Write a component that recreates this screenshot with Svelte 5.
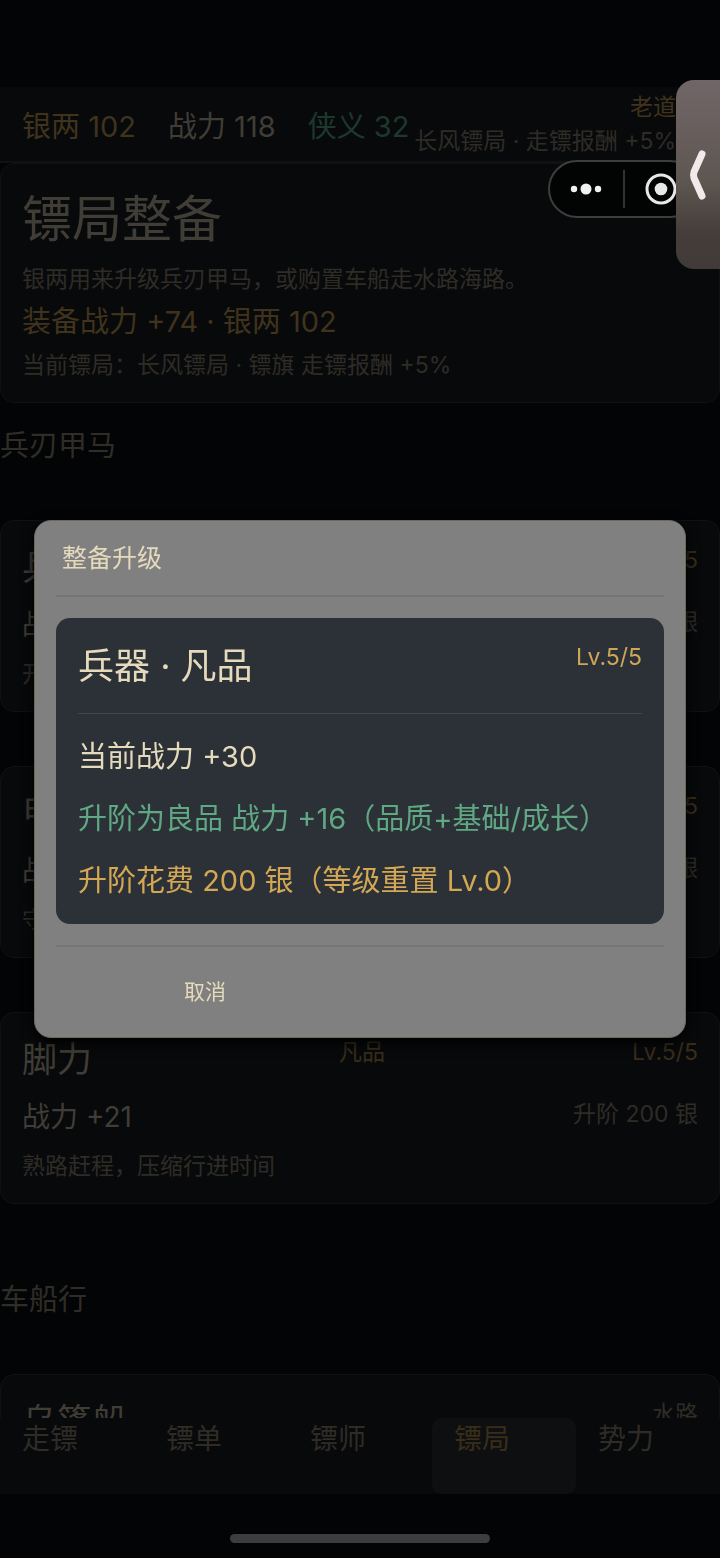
<script>
  let activeTab = '镖局';
  let showUpgrade = true;

  const tabs = ['走镖', '镖单', '镖师', '镖局', '势力'];

  const gear = [
    { name: '兵器', grade: '凡品', level: 'Lv.5/5', power: 30, cost: 200, desc: '开锋砺刃，增添战力' },
    { name: '甲胄', grade: '凡品', level: 'Lv.5/5', power: 23, cost: 200, desc: '守身护镖，减少折损' },
    { name: '脚力', grade: '凡品', level: 'Lv.5/5', power: 21, cost: 200, desc: '熟路赶程，压缩行进时间' }
  ];
</script>

<div class="app">
  <header class="topbar">
    <div class="stats">
      <span class="gold">银两 102</span>
      <span>战力 118</span>
      <span class="green">侠义 32</span>
    </div>
    <div class="player">
      <span class="gold">老道</span>
      <span>长风镖局 · 走镖报酬 +5%</span>
    </div>
  </header>

  <main>
    <section class="card hero">
      <h1>镖局整备</h1>
      <p class="small">银两用来升级兵刃甲马，或购置车船走水路海路。</p>
      <p class="total">装备战力 +74 · 银两 102</p>
      <p class="small">当前镖局：长风镖局 · 镖旗 走镖报酬 +5%</p>
    </section>

    <section class="group">
      <h2>兵刃甲马</h2>
      {#each gear as item}
        <article class="card item">
          <div class="row">
            <h3>{item.name}</h3>
            <span class="tag">{item.grade}</span>
            <span class="tag">{item.level}</span>
          </div>
          <div class="row">
            <span class="power">战力 +{item.power}</span>
            <span class="cost">升阶 {item.cost} 银</span>
          </div>
          <p class="desc">{item.desc}</p>
        </article>
      {/each}
    </section>

    <section class="group boats">
      <h2>车船行</h2>
      <article class="card item">
        <div class="row">
          <h3>乌篷船</h3>
          <span class="cost">水路</span>
        </div>
      </article>
    </section>
  </main>

  <nav class="tabs">
    {#each tabs as tab}
      <button class:active={tab === activeTab} on:click={() => (activeTab = tab)}>{tab}</button>
    {/each}
  </nav>
  <div class="home"><span></span></div>
</div>

{#if showUpgrade}
  <div class="overlay">
    <div class="dialog" role="dialog" aria-labelledby="dialog-title">
      <h2 id="dialog-title">整备升级</h2>
      <div class="detail">
        <div class="detail-head">
          <h3>兵器 · 凡品</h3>
          <span>Lv.5/5</span>
        </div>
        <p>当前战力 +30</p>
        <p class="gain">升阶为良品 战力 +16（品质+基础/成长）</p>
        <p class="price">升阶花费 200 银（等级重置 Lv.0）</p>
      </div>
      <div class="actions">
        <button on:click={() => (showUpgrade = false)}>取消</button>
      </div>
    </div>
  </div>
{/if}

<div class="capsule">
  <button aria-label="更多">
    <svg width="34" height="14" viewBox="0 0 34 14" fill="#f2f2f2">
      <circle cx="5" cy="7" r="3.2" />
      <circle cx="17" cy="7" r="5.5" />
      <circle cx="29" cy="7" r="3.2" />
    </svg>
  </button>
  <i></i>
  <button aria-label="关闭">
    <svg width="32" height="32" viewBox="0 0 32 32">
      <circle cx="16" cy="16" r="14" fill="none" stroke="#e8e8e8" stroke-width="3" />
      <circle cx="16" cy="16" r="6.3" fill="#e8e8e8" />
    </svg>
  </button>
</div>

<button class="drawer" aria-label="展开">
  <svg width="20" height="54" viewBox="0 0 20 54" fill="none" stroke="#f1e9ea" stroke-width="7" stroke-linecap="round" stroke-linejoin="round">
    <path d="M14 6 L6 24 Q5 27 6 30 L14 48" />
  </svg>
</button>

<style>
  :global(body) {
    background: #030406;
  }

  .app,
  .overlay {
    font-family: Inter, "Noto Sans CJK SC", sans-serif;
    font-weight: 400;
  }

  .app {
    display: flex;
    flex-direction: column;
    height: 100vh;
    box-sizing: border-box;
    padding-top: 87px;
    color: #403d36;
    font-size: 29px;
    overflow: hidden;
  }

  h1,
  h2,
  h3,
  p {
    margin: 0;
    font-weight: 400;
  }

  button {
    border: 0;
    padding: 0;
    background: none;
    font: inherit;
    color: inherit;
    cursor: pointer;
  }

  .topbar {
    display: flex;
    justify-content: space-between;
    align-items: center;
    box-sizing: border-box;
    height: 76px;
    padding: 0 44px 0 22px;
    background: #08090b;
    border-bottom: 2px solid #0f120f;
    white-space: nowrap;
  }

  .stats {
    display: flex;
    gap: 32px;
  }

  .gold {
    color: #40331b;
  }

  .green {
    color: #1c392c;
  }

  .player {
    display: flex;
    flex-direction: column;
    align-items: flex-end;
    font-size: 23px;
    line-height: 34px;
    color: #2f2c26;
  }

  main {
    flex: 1;
    min-height: 0;
    overflow: hidden;
  }

  .card {
    background: #08090b;
    border: 1px solid #0f1213;
    border-radius: 14px;
  }

  .hero {
    display: flex;
    flex-direction: column;
    gap: 8px;
    padding: 20px 21px;
  }

  h1 {
    font-size: 50px;
    line-height: 70px;
  }

  .small {
    font-size: 23px;
    line-height: 34px;
    color: #2f2c26;
  }

  .total {
    line-height: 36px;
    color: #40331b;
  }

  .group {
    display: flex;
    flex-direction: column;
    gap: 54px;
    margin-top: 23px;
  }

  .boats {
    margin-top: 76px;
  }

  .group h2 {
    font-size: 29px;
    line-height: 40px;
    color: #302d26;
  }

  .item {
    display: flex;
    flex-direction: column;
    gap: 14px;
    padding: 22px 21px;
  }

  .row {
    display: flex;
    justify-content: space-between;
    align-items: flex-start;
  }

  .item h3 {
    font-size: 35px;
    line-height: 48px;
  }

  .tag,
  .cost {
    font-size: 23px;
    line-height: 34px;
    color: #2f2c26;
  }

  .tag {
    color: #392d1a;
  }

  .power {
    font-size: 28px;
    line-height: 40px;
  }

  .desc {
    font-size: 23px;
    line-height: 30px;
    color: #2f2c26;
  }

  .tabs {
    display: flex;
    height: 76px;
    background: #08090b;
  }

  .tabs button {
    flex: 1;
    display: flex;
    align-items: flex-start;
    padding: 0 22px;
    border-radius: 10px;
    font-size: 28px;
    line-height: 42px;
    color: #2f2c26;
  }

  .tabs button.active {
    background: #0e0f11;
    color: #392d1a;
  }

  .home {
    display: flex;
    justify-content: center;
    align-items: flex-end;
    box-sizing: border-box;
    height: 64px;
    padding-bottom: 15px;
  }

  .home span {
    width: 36%;
    height: 9px;
    border-radius: 5px;
    background: #3c3e3e;
  }

  .overlay {
    position: fixed;
    inset: 0;
    display: flex;
    align-items: center;
    justify-content: center;
    padding: 0 34px;
    color: #e6dabd;
  }

  .dialog {
    flex: 1;
    padding: 0 21px;
    background: #808080;
    border: 1px solid #6d6a5c;
    border-radius: 17px;
    box-shadow: 0 4px 14px #000;
  }

  .dialog h2 {
    padding: 0 6px;
    border-bottom: 2px solid #757575;
    font-size: 25px;
    line-height: 74px;
  }

  .detail {
    margin: 21px 0;
    padding: 22px;
    border-radius: 14px;
    background: #2b3136;
    font-size: 29px;
  }

  .detail-head {
    display: flex;
    justify-content: space-between;
    align-items: flex-start;
    padding-bottom: 21px;
    border-bottom: 1px solid #45463f;
    margin-bottom: 22px;
  }

  .detail h3 {
    font-size: 36px;
    line-height: 52px;
  }

  .detail-head span {
    font-size: 23px;
    line-height: 34px;
    color: #cfa657;
  }

  .detail p {
    line-height: 42px;
  }

  .detail p + p {
    margin-top: 20px;
  }

  .detail .gain {
    color: #5fa883;
  }

  .detail .price {
    color: #d4a754;
  }

  .actions {
    display: grid;
    grid-template-columns: 1fr 1fr;
    gap: 12px;
    padding-bottom: 4px;
    border-top: 2px solid #757575;
  }

  .actions button {
    height: 86px;
    font-size: 21px;
  }

  .capsule {
    position: fixed;
    top: 160px;
    right: 21px;
    display: flex;
    align-items: center;
    box-sizing: border-box;
    width: 151px;
    height: 58px;
    border: 2px solid #3d3d3d;
    border-radius: 29px;
    background: #020303;
  }

  .capsule button {
    flex: 1;
    display: flex;
    justify-content: center;
  }

  .capsule i {
    width: 2px;
    height: 38px;
    background: #333;
  }

  .drawer {
    position: fixed;
    top: 80px;
    right: 0;
    display: flex;
    align-items: center;
    justify-content: center;
    width: 44px;
    height: 189px;
    border-radius: 18px 0 0 18px;
    background: linear-gradient(#706667, #655c5a 35%, #5c5650 55%, #453e3b 80%, #403a38);
  }
</style>
